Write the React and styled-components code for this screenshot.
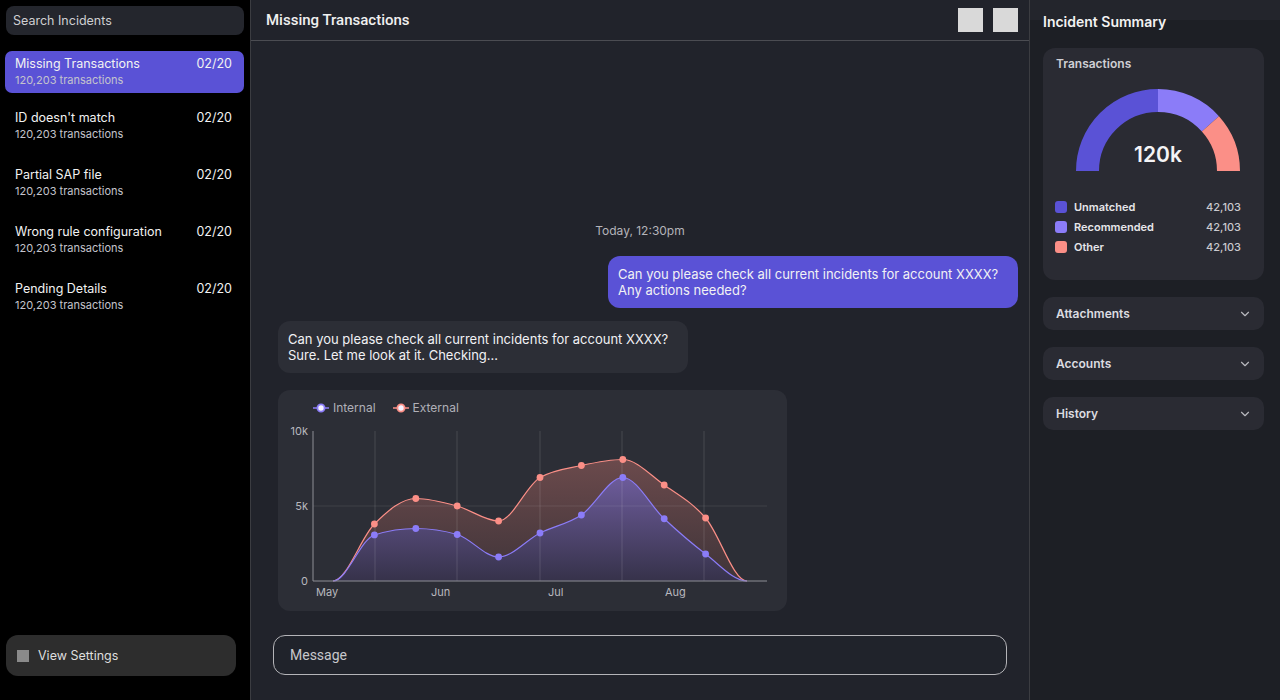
import React from "react";
import styled, { createGlobalStyle } from "styled-components";
import { ChevronDown } from "lucide-react";

const GlobalStyle = createGlobalStyle`
  html, body {
    margin: 0;
    padding: 0;
    background: #000;
  }
  * {
    box-sizing: border-box;
  }
  body {
    font-family: Inter, "Noto Sans", sans-serif;
    color: #eee;
  }
`;

const Layout = styled.div`
  display: flex;
  height: 100vh;
  width: 100vw;
  overflow: hidden;
`;

/* ---------- sidebar ---------- */

const Sidebar = styled.aside`
  width: 251px;
  flex-shrink: 0;
  background: #000;
  border-right: 1px solid #3b3c41;
  display: flex;
  flex-direction: column;
  padding: 6px 6px 24px 5px;
`;

const Search = styled.div`
  height: 29px;
  margin-left: 1px;
  border-radius: 8px;
  background: #24262d;
  color: #cfcfd2;
  font-size: 12.5px;
  display: flex;
  align-items: center;
  padding-left: 7px;
`;

const IncidentList = styled.div`
  display: flex;
  flex-direction: column;
  gap: 12px;
  margin-top: 16px;
`;

const Incident = styled.div`
  height: ${(p) => (p.active ? "42px" : "45px")};
  border-radius: 7px;
  background: ${(p) => (p.active ? "#5a52d6" : "transparent")};
  padding: 5px 12px 0 10px;
  display: flex;
  flex-direction: column;
`;

const IncidentRow = styled.div`
  display: flex;
  justify-content: space-between;
  font-size: 12.5px;
  line-height: 16px;
  color: #f2f2f2;
`;

const IncidentMeta = styled.div`
  font-size: 11px;
  line-height: 14px;
  color: #c4c4cc;
  margin-top: 1px;
`;

const SettingsButton = styled.div`
  margin-top: auto;
  margin-left: 1px;
  width: 230px;
  height: 41px;
  border-radius: 12px;
  background: #2d2d2d;
  display: flex;
  align-items: center;
  gap: 9px;
  padding-left: 11px;
  font-size: 12.5px;
  color: #dedede;
`;

const SettingsIcon = styled.span`
  width: 12px;
  height: 12px;
  background: #8a8a8a;
`;

/* ---------- main ---------- */

const Main = styled.main`
  width: 779px;
  flex-shrink: 0;
  background: #21232b;
  border-right: 1px solid #3b3c41;
  display: flex;
  flex-direction: column;
`;

const Header = styled.header`
  height: 41px;
  flex-shrink: 0;
  border-bottom: 1px solid #4b4c52;
  display: flex;
  align-items: center;
  padding: 0 11px 0 15px;
`;

const HeaderTitle = styled.h1`
  margin: 0;
  flex: 1;
  font-family: Roboto, "Liberation Sans", sans-serif;
  font-size: 15px;
  font-weight: 500;
  color: #f0f0f0;
`;

const HeaderActions = styled.div`
  display: flex;
  gap: 10px;
`;

const SquareButton = styled.div`
  width: 25px;
  height: 24px;
  background: #d9d9d9;
`;

const Chat = styled.section`
  flex: 1;
  display: flex;
  flex-direction: column;
  justify-content: flex-end;
  padding: 0 11px 24px 27px;
`;

const Timestamp = styled.div`
  text-align: center;
  font-size: 12px;
  line-height: 14px;
  color: #b4b4ba;
  margin-bottom: 18px;
  margin-left: -16px;
`;

const Bubble = styled.div`
  width: 410px;
  padding: 10px 10px;
  border-radius: 12px;
  font-size: 13px;
  line-height: 16px;
  align-self: ${(p) => (p.mine ? "flex-end" : "flex-start")};
  background: ${(p) => (p.mine ? "#5a52d6" : "#2c2e36")};
  color: #f1f1f4;
  margin-bottom: ${(p) => (p.mine ? "13px" : "17px")};
`;

const ChartCard = styled.div`
  width: 509px;
  height: 221px;
  border-radius: 12px;
  background: #2c2e36;
  display: flex;
  flex-direction: column;
`;

const ChartLegend = styled.div`
  display: flex;
  gap: 17px;
  padding: 11px 0 0 35px;
  height: 30px;
`;

const LegendItem = styled.div`
  display: flex;
  align-items: center;
  gap: 4px;
  height: 14px;
  font-size: 12px;
  line-height: 14px;
  color: #b0b0b8;
`;

const Composer = styled.div`
  padding: 0 22px 25px 22px;
`;

const MessageBox = styled.div`
  height: 40px;
  border: 1px solid #b4b4b8;
  border-radius: 12px;
  background: #20232b;
  display: flex;
  align-items: center;
  padding-left: 16px;
  font-family: Roboto, "Liberation Sans", sans-serif;
  font-size: 14px;
  color: #c8c8cc;
`;

/* ---------- summary panel ---------- */

const Summary = styled.aside`
  flex: 1;
  background: linear-gradient(#23252c 0, #23252c 20px, #1d1f25 20px);
  padding: 13px 16px 0 13px;
  display: flex;
  flex-direction: column;
`;

const SummaryTitle = styled.h2`
  margin: 0 0 18px;
  font-size: 14px;
  line-height: 17px;
  font-weight: 600;
  color: #f2f2f2;
`;

const Card = styled.div`
  background: #2a2b33;
  border-radius: 12px;
  padding: 9px 23px 23px 12px;
`;

const CardTitle = styled.div`
  font-size: 12px;
  line-height: 14px;
  font-weight: 600;
  color: #cfcfd4;
  margin-left: 1px;
`;

const Gauge = styled.svg`
  display: block;
  margin: 18px 0 0 21px;
`;

const GaugeLegend = styled.div`
  display: flex;
  flex-direction: column;
  margin-top: 26px;
`;

const GaugeRow = styled.div`
  display: flex;
  align-items: center;
  height: 20px;
  font-size: 11px;
`;

const Swatch = styled.span`
  width: 12px;
  height: 12px;
  border-radius: 3px;
  background: ${(p) => p.color};
  margin-right: 7px;
`;

const SwatchLabel = styled.span`
  flex: 1;
  font-weight: 600;
  color: #e6e6ea;
`;

const SwatchValue = styled.span`
  color: #c9c9ce;
  font-weight: 500;
`;

const Accordion = styled.div`
  margin-top: 17px;
  height: 33px;
  border-radius: 10px;
  background: #2a2b33;
  display: flex;
  align-items: center;
  justify-content: space-between;
  padding: 0 12px 0 13px;
  font-size: 12px;
  font-weight: 600;
  color: #dcdce0;
  svg {
    color: #b8b8be;
  }
`;

/* ---------- chart helpers ---------- */

const PURPLE = "#8b7cf8";
const SALMON = "#fb8f87";
const INDIGO = "#5a52d6";

const xs = Array.from({ length: 11 }, (_, i) => 55 + i * 41.4);
const toY = (v) => 161 - v * 15;
const external = [0, 3.8, 5.5, 5.0, 4.0, 6.9, 7.7, 8.1, 6.4, 4.2, 0];
const internal = [0, 3.07, 3.5, 3.1, 1.6, 3.2, 4.4, 6.9, 4.15, 1.8, 0];

// monotone cubic through the points, flat at both ends
function monotone(values) {
  const pts = values.map((v, i) => [xs[i], toY(v)]);
  const n = pts.length;
  const d = [];
  for (let i = 0; i < n - 1; i++) {
    d.push((pts[i + 1][1] - pts[i][1]) / (pts[i + 1][0] - pts[i][0]));
  }
  const m = new Array(n).fill(0);
  for (let i = 1; i < n - 1; i++) {
    const s0 = d[i - 1];
    const s1 = d[i];
    const h0 = pts[i][0] - pts[i - 1][0];
    const h1 = pts[i + 1][0] - pts[i][0];
    const p = (s0 * h1 + s1 * h0) / (h0 + h1);
    m[i] =
      (Math.sign(s0) + Math.sign(s1)) *
        Math.min(Math.abs(s0), Math.abs(s1), 0.5 * Math.abs(p)) || 0;
  }
  let path = `M${pts[0][0]},${pts[0][1]}`;
  for (let i = 0; i < n - 1; i++) {
    const h = (pts[i + 1][0] - pts[i][0]) / 3;
    path += ` C${pts[i][0] + h},${pts[i][1] + m[i] * h} ${pts[i + 1][0] - h},${
      pts[i + 1][1] - m[i + 1] * h
    } ${pts[i + 1][0]},${pts[i + 1][1]}`;
  }
  return path;
}

const area = (line) => `${line} L${xs[10]},161 L${xs[0]},161 Z`;

function LegendMark({ color }) {
  return (
    <svg width="16" height="10" viewBox="0 0 16 10">
      <line x1="0" y1="5" x2="16" y2="5" stroke={color} strokeWidth="1.5" />
      <circle cx="8" cy="5" r="3.6" fill="#f4f2ff" stroke={color} strokeWidth="1.8" />
    </svg>
  );
}

function TrendChart() {
  const extLine = monotone(external);
  const intLine = monotone(internal);
  return (
    <ChartCard>
      <ChartLegend>
        <LegendItem>
          <LegendMark color={PURPLE} />
          Internal
        </LegendItem>
        <LegendItem>
          <LegendMark color={SALMON} />
          External
        </LegendItem>
      </ChartLegend>
      <svg width="509" height="191" viewBox="0 0 509 191">
        <defs>
          <linearGradient id="extFill" x1="0" y1="0" x2="0" y2="1">
            <stop offset="0" stopColor="#6b4a4c" />
            <stop offset="1" stopColor="#3f3439" />
          </linearGradient>
          <linearGradient id="intFill" x1="0" y1="0" x2="0" y2="1">
            <stop offset="0" stopColor="#6d5c9b" />
            <stop offset="1" stopColor="#36324a" />
          </linearGradient>
        </defs>
        <path d={area(extLine)} fill="url(#extFill)" />
        <path d={area(intLine)} fill="url(#intFill)" />
        {[97, 179, 262, 344, 426].map((x) => (
          <line
            key={x}
            x1={x}
            y1="11"
            x2={x}
            y2="161"
            stroke="rgba(255,255,255,0.13)"
            strokeWidth="1"
          />
        ))}
        <line x1="35" y1="86" x2="489" y2="86" stroke="rgba(255,255,255,0.09)" strokeWidth="1" />
        <path d={extLine} fill="none" stroke={SALMON} strokeWidth="1.2" />
        <path d={intLine} fill="none" stroke={PURPLE} strokeWidth="1.2" />
        {external.slice(1, 10).map((v, i) => (
          <circle key={"e" + i} cx={xs[i + 1]} cy={toY(v)} r="3.4" fill={SALMON} />
        ))}
        {internal.slice(1, 10).map((v, i) => (
          <circle key={"i" + i} cx={xs[i + 1]} cy={toY(v)} r="3.4" fill={PURPLE} />
        ))}
        <line x1="35" y1="11" x2="35" y2="161" stroke="#8d8e95" strokeWidth="1" />
        <line x1="35" y1="161" x2="489" y2="161" stroke="#8d8e95" strokeWidth="1" />
        <g fontFamily="Inter, sans-serif" fontSize="11" fill="#b8b8be">
          <text x="30" y="15" textAnchor="end">10k</text>
          <text x="30" y="90" textAnchor="end">5k</text>
          <text x="30" y="165" textAnchor="end">0</text>
          <text x="38" y="176">May</text>
          <text x="153" y="176">Jun</text>
          <text x="270" y="176">Jul</text>
          <text x="387" y="176">Aug</text>
        </g>
      </svg>
    </ChartCard>
  );
}

function arcPoint(deg, r) {
  const rad = (deg * Math.PI) / 180;
  return [82 + r * Math.cos(rad), 82 - r * Math.sin(rad)];
}

function arc(from, to, r) {
  const [x0, y0] = arcPoint(from, r);
  const [x1, y1] = arcPoint(to, r);
  return `M${x0},${y0} A${r},${r} 0 0 1 ${x1},${y1}`;
}

function TransactionsGauge() {
  const r = 70.5;
  return (
    <Gauge width="164" height="82" viewBox="0 0 164 82">
      <path d={arc(180, 90, r)} fill="none" stroke={INDIGO} strokeWidth="23" />
      <path d={arc(90, 42, r)} fill="none" stroke={PURPLE} strokeWidth="23" />
      <path d={arc(42, 0, r)} fill="none" stroke={SALMON} strokeWidth="23" />
      <text
        x="82"
        y="73"
        textAnchor="middle"
        fontFamily="Inter, sans-serif"
        fontSize="21"
        fontWeight="600"
        fill="#f4f4f6"
      >
        120k
      </text>
    </Gauge>
  );
}

const incidents = [
  "Missing Transactions",
  "ID doesn't match",
  "Partial SAP file",
  "Wrong rule configuration",
  "Pending Details",
];

const breakdown = [
  { label: "Unmatched", color: INDIGO },
  { label: "Recommended", color: PURPLE },
  { label: "Other", color: SALMON },
];

export default function App() {
  return (
    <>
      <GlobalStyle />
      <Layout>
        <Sidebar>
          <Search>Search Incidents</Search>
          <IncidentList>
            {incidents.map((name, i) => (
              <Incident key={name} active={i === 0}>
                <IncidentRow>
                  <span>{name}</span>
                  <span>02/20</span>
                </IncidentRow>
                <IncidentMeta>120,203 transactions</IncidentMeta>
              </Incident>
            ))}
          </IncidentList>
          <SettingsButton>
            <SettingsIcon />
            View Settings
          </SettingsButton>
        </Sidebar>

        <Main>
          <Header>
            <HeaderTitle>Missing Transactions</HeaderTitle>
            <HeaderActions>
              <SquareButton />
              <SquareButton />
            </HeaderActions>
          </Header>
          <Chat>
            <Timestamp>Today, 12:30pm</Timestamp>
            <Bubble mine>
              Can you please check all current incidents for account XXXX?
              <br />
              Any actions needed?
            </Bubble>
            <Bubble>
              Can you please check all current incidents for account XXXX?
              <br />
              Sure. Let me look at it. Checking...
            </Bubble>
            <TrendChart />
          </Chat>
          <Composer>
            <MessageBox>Message</MessageBox>
          </Composer>
        </Main>

        <Summary>
          <SummaryTitle>Incident Summary</SummaryTitle>
          <Card>
            <CardTitle>Transactions</CardTitle>
            <TransactionsGauge />
            <GaugeLegend>
              {breakdown.map((b) => (
                <GaugeRow key={b.label}>
                  <Swatch color={b.color} />
                  <SwatchLabel>{b.label}</SwatchLabel>
                  <SwatchValue>42,103</SwatchValue>
                </GaugeRow>
              ))}
            </GaugeLegend>
          </Card>
          {["Attachments", "Accounts", "History"].map((t) => (
            <Accordion key={t}>
              {t}
              <ChevronDown size={14} strokeWidth={2} />
            </Accordion>
          ))}
        </Summary>
      </Layout>
    </>
  );
}
